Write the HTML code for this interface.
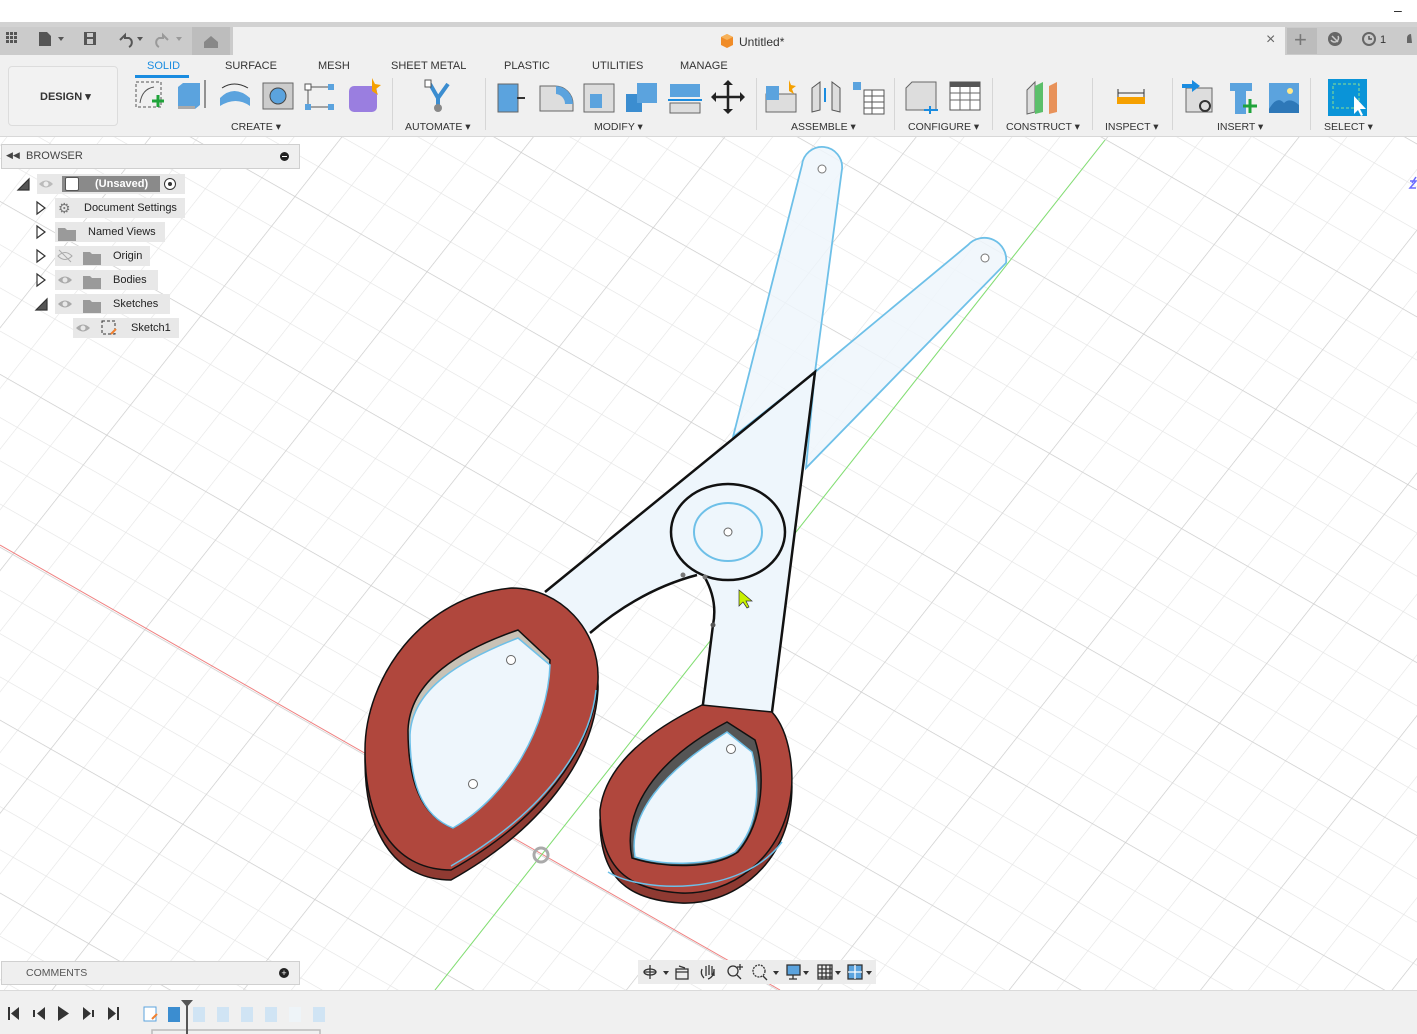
<!DOCTYPE html>
<html><head><meta charset="utf-8">
<style>
*{margin:0;padding:0;box-sizing:border-box}
body{width:1417px;height:1034px;overflow:hidden;background:#fff;font-family:"Liberation Sans",sans-serif;font-size:11px;color:#333;position:relative}
.abs{position:absolute}
.tabt{position:absolute;top:60px;font-size:11px;color:#333}
.grp{position:absolute;top:121px;font-size:10.5px;color:#333}
.sep{position:absolute;top:78px;width:1px;height:52px;background:#d6d6d6}
.row{position:absolute;height:20px;background:#e8e8e8;font-size:11px;line-height:20px;color:#222}
</style></head><body>
<div class="abs" style="left:1394px;top:2px;font-size:14px;color:#222">–</div>
<div class="abs" style="left:0;top:22px;width:1417px;height:6px;background:#d2d2d2"></div>
<div class="abs" style="left:0;top:27px;width:233px;height:28px;background:#cbcbcb"></div>
<div class="abs" style="left:192px;top:27px;width:38px;height:28px;background:#bdbdbd"></div>
<div class="abs" style="left:233px;top:27px;width:1052px;height:28px;background:#f0f0f0"></div>
<div class="abs" style="left:1285px;top:27px;width:132px;height:28px;background:#cbcbcb"></div>
<div class="abs" style="left:1287px;top:28px;width:30px;height:26px;background:#bcbcbc"></div>
<svg class="abs" style="left:0;top:27px" width="240" height="28">
<g fill="#555"><rect x="6" y="5" width="3" height="3"/><rect x="10" y="5" width="3" height="3"/><rect x="14" y="5" width="3" height="3"/><rect x="6" y="9" width="3" height="3"/><rect x="10" y="9" width="3" height="3"/><rect x="14" y="9" width="3" height="3"/><rect x="6" y="13" width="3" height="3"/><rect x="10" y="13" width="3" height="3"/><rect x="14" y="13" width="3" height="3"/></g>
<path d="M39 5h8l4 4v10h-12z" fill="#555"/><path d="M58 10l3 4 3-4z" fill="#555"/>
<rect x="84" y="5" width="12" height="13" fill="#555"/><rect x="87" y="6" width="6" height="4" fill="#cbcbcb"/><rect x="87" y="12" width="6" height="5" fill="#cbcbcb"/>
<path d="M120 13 l5 -5 v3 h4 a5 5 0 0 1 0 9" fill="none" stroke="#555" stroke-width="2"/><path d="M137 10l3 4 3-4z" fill="#555"/>
<path d="M168 13 l-5 -5 v3 h-4 a5 5 0 0 0 0 9" fill="none" stroke="#999" stroke-width="2"/><path d="M176 10l3 4 3-4z" fill="#999"/>
<path d="M204 15l7-6 7 6v6h-14z" fill="#888"/>
</svg>
<svg class="abs" style="left:719px;top:33px" width="16" height="16"><path d="M8 1l6 3v8l-6 3-6-3V4z" fill="#f08c28"/><path d="M8 1l6 3-6 3-6-3z" fill="#f7b25a"/></svg>
<div class="abs" style="left:739px;top:35px;font-size:12px;color:#333">Untitled*</div>
<div class="abs" style="left:1266px;top:31px;font-size:16px;color:#666">×</div>
<div class="abs" style="left:1294px;top:27px;font-size:22px;color:#777">+</div>
<svg class="abs" style="left:1326px;top:31px" width="90" height="18"><circle cx="9" cy="8" r="7" fill="#666"/><path d="M6 5 l6 6 M5 9 a4 4 0 0 0 7 -4" stroke="#cbcbcb" stroke-width="1.5" fill="none"/><circle cx="43" cy="8" r="7" fill="#666"/><circle cx="43" cy="8" r="5" fill="#cbcbcb"/><path d="M43 5v3h3" stroke="#555" stroke-width="1.5" fill="none"/><text x="54" y="12" font-size="11" fill="#333" font-family="Liberation Sans">1</text><path d="M85 3a4 4 0 0 0-4 4v5h5" fill="#666"/></svg>

<div class="abs" style="left:0;top:55px;width:1417px;height:82px;background:#f0f0f0;border-bottom:1px solid #d8d8d8"></div>
<div class="abs" style="left:8px;top:66px;width:110px;height:60px;border:1px solid #dcdcdc;border-radius:4px;background:#f2f2f2"></div>
<div class="abs" style="left:40px;top:90px;font-size:11px;font-weight:bold;color:#333">DESIGN ▾</div>
<div class="tabt" style="left:147px;color:#1a8ce0">SOLID</div>
<div class="abs" style="left:135px;top:75px;width:54px;height:3px;background:#1a8ce0"></div>
<div class="tabt" style="left:225px">SURFACE</div>
<div class="tabt" style="left:318px">MESH</div>
<div class="tabt" style="left:391px">SHEET METAL</div>
<div class="tabt" style="left:504px">PLASTIC</div>
<div class="tabt" style="left:592px">UTILITIES</div>
<div class="tabt" style="left:680px">MANAGE</div>
<div class="grp" style="left:231px">CREATE ▾</div>
<div class="grp" style="left:405px">AUTOMATE ▾</div>
<div class="grp" style="left:594px">MODIFY ▾</div>
<div class="grp" style="left:791px">ASSEMBLE ▾</div>
<div class="grp" style="left:908px">CONFIGURE ▾</div>
<div class="grp" style="left:1006px">CONSTRUCT ▾</div>
<div class="grp" style="left:1105px">INSPECT ▾</div>
<div class="grp" style="left:1217px">INSERT ▾</div>
<div class="grp" style="left:1324px">SELECT ▾</div>
<div class="sep" style="left:392px"></div><div class="sep" style="left:485px"></div><div class="sep" style="left:756px"></div><div class="sep" style="left:894px"></div><div class="sep" style="left:992px"></div><div class="sep" style="left:1092px"></div><div class="sep" style="left:1172px"></div><div class="sep" style="left:1310px"></div>
<svg class="abs" style="left:0;top:76px" width="1417" height="40">
<rect x="136" y="6" width="25" height="25" fill="none" stroke="#555" stroke-dasharray="3 2"/><path d="M140 27 q2 -14 14 -16" stroke="#555" fill="none"/><path d="M152 25h12M158 19v12" stroke="#1fa33a" stroke-width="3"/>
<path d="M178 11l5-4h17v22l-5 4h-17z" fill="#5ba3de"/><rect x="178" y="30" width="17" height="3" fill="#aaa"/><path d="M205 4v28" stroke="#333"/>
<path d="M220 22 q14-14 30 0 v8 q-14-10-30 0z" fill="#5ba3de"/><path d="M222 12 q12-8 26 0" stroke="#333" fill="none"/>
<rect x="263" y="7" width="30" height="26" fill="#ccc" stroke="#666"/><circle cx="278" cy="20" r="8" fill="#5ba3de" stroke="#444"/>
<rect x="305" y="8" width="6" height="6" fill="#fff" stroke="#555"/><rect x="328" y="8" width="6" height="6" fill="#5ba3de"/><rect x="305" y="28" width="6" height="6" fill="#5ba3de"/><rect x="328" y="28" width="6" height="6" fill="#5ba3de"/><path d="M311 11h17M308 14v14M311 31h17" stroke="#555"/>
<rect x="349" y="10" width="28" height="26" rx="5" fill="#9a7ee0"/><path d="M372 2l3 6 6 1-5 4 2 6-6-4" fill="#f5a000"/>
<path d="M430 8l8 14 10-14M438 22v10" stroke="#3b8dd0" stroke-width="4" fill="none"/><rect x="425" y="4" width="6" height="7" fill="#fff" stroke="#555"/><circle cx="438" cy="32" r="4" fill="#888"/>
<rect x="498" y="8" width="20" height="28" fill="#5ba3de" stroke="#666"/><path d="M517 22h8" stroke="#333" stroke-width="2"/>
<path d="M540 10h15a18 18 0 0 1 18 18v7h-33z" fill="#ddd" stroke="#666"/><path d="M556 10a18 18 0 0 1 17 18h-8a10 10 0 0 0-9-10z" fill="#5ba3de"/>
<rect x="584" y="8" width="30" height="28" fill="#ddd" stroke="#666"/><rect x="590" y="18" width="12" height="14" fill="#5ba3de"/>
<rect x="626" y="18" width="16" height="18" fill="#3b8dd0"/><rect x="637" y="7" width="20" height="20" fill="#5ba3de"/>
<rect x="670" y="8" width="30" height="13" fill="#5ba3de"/><path d="M668 24h34" stroke="#1a8ce0" stroke-width="2"/><rect x="670" y="27" width="30" height="10" fill="#ddd" stroke="#666"/>
<path d="M728 6v30M713 21h30" stroke="#222" stroke-width="2.5"/><path d="M723 9l5-5 5 5zM723 33l5 5 5-5zM716 16l-5 5 5 5zM740 16l5 5-5 5z" fill="#222"/>
<rect x="766" y="18" width="30" height="18" fill="#ddd" stroke="#666"/><rect x="766" y="10" width="13" height="14" fill="#5ba3de"/><path d="M789 4l2 5 5 1-4 3 2 5-5-3" fill="#f5a000"/>
<path d="M812 12l8-6v28l-8 2zM840 12l-8-6v28l8 2z" fill="#ddd" stroke="#555"/><rect x="824" y="12" width="2" height="14" fill="#1a8ce0"/>
<rect x="853" y="6" width="8" height="8" fill="#5ba3de"/><rect x="864" y="14" width="20" height="24" fill="#fff" stroke="#555"/><path d="M864 20h20M864 26h20M864 32h20M872 14v24" stroke="#555"/>
<path d="M906 12l6-6h24v28h-30z" fill="#ddd" stroke="#666"/><path d="M924 34h14M930 30v8" stroke="#1a8ce0" stroke-width="2"/>
<rect x="950" y="6" width="30" height="28" fill="#fff" stroke="#555"/><rect x="950" y="6" width="30" height="5" fill="#555"/><path d="M950 17h30M950 24h30M960 11v23M970 11v23" stroke="#666"/>
<path d="M1027 14l8-8v30l-8 2z" fill="#ddd" stroke="#666"/><path d="M1035 10l8-4v30l-8 2z" fill="#5bbf6a"/><path d="M1049 10l8-4v30l-8 2z" fill="#e8925a"/>
<rect x="1117" y="21" width="28" height="7" fill="#f5a000"/><path d="M1118 17h26M1118 13v8M1144 13v8" stroke="#333"/>
<rect x="1186" y="12" width="26" height="24" fill="#ddd" stroke="#666"/><path d="M1182 10h12" stroke="#1a8ce0" stroke-width="4"/><path d="M1192 4l8 6-8 6z" fill="#1a8ce0"/><circle cx="1205" cy="30" r="5" fill="none" stroke="#333" stroke-width="2"/>
<rect x="1230" y="7" width="22" height="8" fill="#5ba3de"/><rect x="1235" y="15" width="11" height="23" fill="#5ba3de"/><path d="M1243 30h14M1250 23v14" stroke="#1fa33a" stroke-width="3"/>
<rect x="1269" y="7" width="30" height="30" fill="#5ba3de"/><circle cx="1290" cy="15" r="3" fill="#ffe88a"/><path d="M1269 33 q8-14 15-6 q6-6 15 2v8h-30z" fill="#2e78b8"/>
<rect x="1328" y="3" width="39" height="39" fill="#0a94d8"/><rect x="1333" y="8" width="26" height="24" fill="none" stroke="#8fe08f" stroke-dasharray="3 2"/><path d="M1354 20v18l4-4 3 6 2-1-3-6h6z" fill="#fff"/>
</svg>

<svg class="abs" style="left:0;top:137px" width="1417" height="853">
<defs>
<pattern id="g" patternUnits="userSpaceOnUse" width="38" height="38" patternTransform="matrix(0.869 0.495 -0.619 0.785 541 718)">
<path d="M0 0H38M0 0V38" stroke="#e4e4e4" stroke-width="1.2" fill="none"/></pattern>
<pattern id="G" patternUnits="userSpaceOnUse" width="152" height="152" patternTransform="matrix(0.869 0.495 -0.619 0.785 541 718)">
<path d="M0 0H152M0 0V152" stroke="#cdcdcd" stroke-width="1.2" fill="none"/></pattern>
</defs>
<rect width="1417" height="853" fill="#fff"/>
<rect width="1417" height="853" fill="url(#g)"/>
<rect width="1417" height="853" fill="url(#G)"/>
<path d="M0 408 L780 853" stroke="#f08080" stroke-width="1"/>
<path d="M1105 3 L435 853" stroke="#80e070" stroke-width="1"/>
<path d="M1412 46 l4-6 M1410 44h6l-6 7h6" stroke="#6a6aff" stroke-width="1.5" fill="none"/>
</svg>

<svg class="abs" style="left:0;top:0" width="1417" height="990">
<g fill="#eef6fc" fill-opacity="0.85" stroke="#6ec0e8" stroke-width="1.8">
<path d="M802 165 a20 20 0 0 1 40 4 L815 372 L733 437 Z"/>
<path d="M968 245 a22 22 0 0 1 38 18 L806 468 L815 372 Z"/>
</g>
<circle cx="822" cy="169" r="4" fill="#fff" stroke="#777"/>
<circle cx="985" cy="258" r="4" fill="#fff" stroke="#777"/>
<path d="M815 372 L545 592 L590 633 Q640 590 697 575 L704 576 Q718 600 713 625 L702 712 L772 712 Z" fill="#eef6fc"/>
<path d="M545 592 L815 372 L772 712 M590 633 Q640 590 697 575 M704 576 Q718 600 713 625 L702 712" fill="none" stroke="#111" stroke-width="2.5"/>
<ellipse cx="728" cy="532" rx="57" ry="48" fill="#eef6fc" stroke="#111" stroke-width="2.5"/>
<ellipse cx="728" cy="532" rx="34" ry="29" fill="none" stroke="#6ec0e8" stroke-width="2"/>
<circle cx="728" cy="532" r="4" fill="#fff" stroke="#666"/>
<circle cx="683" cy="575" r="2.5" fill="#777"/><circle cx="705" cy="577" r="2.5" fill="#777"/><circle cx="713" cy="625" r="2.5" fill="#555"/>
<path d="M512 596 C560 596 600 640 598 690 C594 760 540 830 451 880 C400 880 365 840 365 760 C365 690 420 604 512 596 Z" fill="#8f3a32" stroke="#111" stroke-width="1.5"/>
<path d="M512 588 C560 588 600 630 598 680 C594 750 540 820 451 870 C400 870 365 830 365 750 C365 680 420 596 512 588 Z" fill="#b0473d" stroke="#111" stroke-width="1.5"/>
<path d="M451 866 C540 815 590 750 596 690" stroke="#6ec0e8" stroke-width="1.5" fill="none"/>
<path d="M518 630 L550 660 C548 720 510 790 453 828 C420 815 408 780 408 730 C410 680 460 650 518 630 Z" fill="#c8c2b6" stroke="#111" stroke-width="1.5"/>
<path d="M518 638 L550 665 C548 725 510 795 453 828 C420 815 410 780 410 735 C412 688 462 660 518 638 Z" fill="#eef6fc" stroke="#6ec0e8" stroke-width="1.5"/>
<circle cx="511" cy="660" r="4.5" fill="#fff" stroke="#666"/><circle cx="473" cy="784" r="4.5" fill="#fff" stroke="#666"/>
<path d="M702 715 L772 720 C790 740 795 780 790 810 C780 870 730 905 681 903 C630 900 600 880 600 820 C605 780 640 745 702 715 Z" fill="#8f3a32" stroke="#111" stroke-width="1.5"/>
<path d="M702 705 L772 712 C790 732 795 772 790 800 C780 860 730 895 681 893 C630 890 600 870 600 810 C605 770 640 735 702 705 Z" fill="#b0473d" stroke="#111" stroke-width="1.5"/>
<path d="M608 872 C640 892 740 898 782 842" stroke="#6ec0e8" stroke-width="1.5" fill="none"/>
<path d="M727 722 L755 740 C765 770 765 820 738 852 C712 870 662 868 632 858 C622 810 655 760 727 722 Z" fill="#555" stroke="#111" stroke-width="1.5"/>
<path d="M727 732 L752 752 C760 785 760 825 735 852 C710 866 664 866 635 857 C628 815 662 772 727 732 Z" fill="#eef6fc" stroke="#6ec0e8" stroke-width="1.5"/>
<circle cx="731" cy="749" r="4.5" fill="#fff" stroke="#666"/>
<circle cx="541" cy="855" r="7" fill="none" stroke="#aaa" stroke-width="3"/>
<path d="M739 590 l0 16 4-4 4 6 2-1-3-6 6 0z" fill="#c8f000" stroke="#333" stroke-width="0.7"/>
</svg>

<div class="abs" style="left:1px;top:144px;width:299px;height:25px;background:#efefef;border:1px solid #cfcfcf"></div>
<div class="abs" style="left:6px;top:150px;font-size:9px;color:#444">◀◀</div>
<div class="abs" style="left:26px;top:150px;font-size:11px;color:#444">BROWSER</div>
<div class="abs" style="left:280px;top:152px;width:9px;height:9px;border-radius:50%;background:#222"></div>
<div class="abs" style="left:282px;top:156px;width:5px;height:1px;background:#fff"></div>
<svg class="abs" style="left:0;top:170px" width="200" height="170">
<g fill="#fff" stroke="#333" stroke-width="1.2">
<path d="M18 20h11v-11z" fill="#555"/>
<path d="M37 32v12l8-6z"/><path d="M37 56v12l8-6z"/><path d="M37 80v12l8-6z"/><path d="M37 104v12l8-6z"/>
<path d="M36 140h11v-11z" fill="#555"/>
</g></svg>
<div class="row" style="left:37px;top:174px;width:148px"></div>
<div class="abs" style="left:62px;top:176px;width:98px;height:16px;background:#8a8a8a"></div>
<div class="abs" style="left:65px;top:177px;width:14px;height:14px;background:#fff;border:1px solid #555;border-radius:2px"></div>
<div class="abs" style="left:95px;top:178px;font-size:11px;font-weight:bold;color:#fff">(Unsaved)</div>
<div class="abs" style="left:164px;top:178px;width:12px;height:12px;border:1.5px solid #333;border-radius:50%;background:#fff"></div>
<div class="abs" style="left:168px;top:182px;width:4px;height:4px;border-radius:50%;background:#333"></div>
<svg class="abs" style="left:36px;top:176px" width="20" height="16"><path d="M3 8 q7-7 14 0 q-7 7-14 0z" fill="#bbb"/><circle cx="10" cy="8" r="2.5" fill="#eee"/></svg>
<div class="row" style="left:55px;top:198px;width:130px"><span style="position:absolute;left:29px">Document Settings</span></div>
<div class="abs" style="left:58px;top:201px;font-size:14px;color:#777;line-height:14px">⚙</div>
<div class="row" style="left:55px;top:222px;width:110px"><span style="position:absolute;left:33px">Named Views</span></div>
<div class="row" style="left:55px;top:246px;width:95px"><span style="position:absolute;left:58px">Origin</span></div>
<div class="row" style="left:55px;top:270px;width:103px"><span style="position:absolute;left:58px">Bodies</span></div>
<div class="row" style="left:55px;top:294px;width:115px"><span style="position:absolute;left:58px">Sketches</span></div>
<div class="row" style="left:73px;top:318px;width:106px"><span style="position:absolute;left:58px">Sketch1</span></div>
<svg class="abs" style="left:55px;top:198px" width="130" height="140">
<g fill="#9a9a9a"><path d="M3 30h7l2 2h9v11h-18z"/><path d="M28 54h7l2 2h9v11h-18z"/><path d="M28 78h7l2 2h9v11h-18z"/><path d="M28 102h7l2 2h9v11h-18z"/></g>
<path d="M3 58 q7-7 14 0 q-7 7-14 0z M4 52 l12 12" fill="none" stroke="#aaa"/>
<path d="M3 82 q7-7 14 0 q-7 7-14 0z" fill="#aaa"/><circle cx="10" cy="82" r="2.5" fill="#e8e8e8"/>
<path d="M3 106 q7-7 14 0 q-7 7-14 0z" fill="#aaa"/><circle cx="10" cy="106" r="2.5" fill="#e8e8e8"/>
<path d="M21 130 q7-7 14 0 q-7 7-14 0z" fill="#aaa"/><circle cx="28" cy="130" r="2.5" fill="#e8e8e8"/>
<rect x="47" y="123" width="13" height="13" fill="none" stroke="#333" stroke-dasharray="3 2"/><path d="M56 136l5-5" stroke="#f08030" stroke-width="2"/>
</svg>

<div class="abs" style="left:1px;top:961px;width:299px;height:24px;background:#efefef;border:1px solid #d0d0d0"></div>
<div class="abs" style="left:26px;top:967px;font-size:10.5px;color:#555">COMMENTS</div>
<div class="abs" style="left:279px;top:968px;width:10px;height:10px;border-radius:50%;background:#222;color:#fff;font-size:9px;line-height:10px;text-align:center">+</div>
<div class="abs" style="left:638px;top:960px;width:238px;height:24px;background:#ececec"></div>
<svg class="abs" style="left:638px;top:960px" width="240" height="24">
<g stroke="#333" fill="none" stroke-width="1.3">
<path d="M12 5v14M6 12h12"/><ellipse cx="12" cy="12" rx="6" ry="3"/>
<rect x="38" y="9" width="12" height="10"/><path d="M38 12h12M41 6l6 2"/>
<path d="M66 18 q-4-4-2-9 M68 16v-10M71 15v-10M74 15v-9M76 16v-7 q0 8-6 10"/>
<circle cx="95" cy="11" r="5"/><path d="M99 15l4 4M102 4v6M99 7h6"/>
<circle cx="121" cy="11" r="6" stroke-dasharray="2 1"/><path d="M125 16l4 4"/>
<rect x="149" y="5" width="13" height="10" fill="#5ba3de"/><path d="M155 15v4M151 19h8"/>
<rect x="180" y="5" width="14" height="14"/><path d="M180 9h14M180 13h14M180 17h14M184 5v14M188 5v14M192 5v14"/>
<rect x="210" y="5" width="14" height="14" fill="#5ba3de"/><path d="M217 5v14M210 12h14" stroke="#fff"/>
</g>
<g fill="#333"><path d="M25 11l3 4 3-4z"/><path d="M135 11l3 4 3-4z"/><path d="M165 11l3 4 3-4z"/><path d="M197 11l3 4 3-4z"/><path d="M228 11l3 4 3-4z"/></g>
</svg>

<div class="abs" style="left:0;top:990px;width:1417px;height:44px;background:#f0f0f0;border-top:1px solid #dadada"></div>
<svg class="abs" style="left:0;top:990px" width="340" height="44">
<g fill="#333"><rect x="8" y="17" width="2" height="13"/><path d="M19 17v13l-8-6.5z"/><path d="M45 17v13l-8-6.5z"/><rect x="33" y="20" width="2" height="7"/><path d="M58 16v15l11-7.5z"/><path d="M83 17v13l8-6.5z"/><rect x="92" y="20" width="2" height="7"/><path d="M108 17v13l8-6.5z"/><rect x="117" y="17" width="2" height="13"/></g>
<rect x="144" y="17" width="12" height="14" fill="#fff" stroke="#5ba3de"/><path d="M152 29l5-5" stroke="#f08030" stroke-width="2"/>
<rect x="168" y="17" width="12" height="15" fill="#3b8dd0"/>
<g fill="#d0e4f4"><rect x="193" y="17" width="12" height="15"/><rect x="217" y="17" width="12" height="15"/><rect x="241" y="17" width="12" height="15"/><rect x="265" y="17" width="12" height="15"/><rect x="289" y="17" width="12" height="15" fill="#eef4f8"/><rect x="313" y="17" width="12" height="15"/></g>
<path d="M152 46v-6h168v6" stroke="#bbb" fill="none" stroke-width="1.5"/>
<rect x="186" y="14" width="2" height="30" fill="#555"/><path d="M181 10h12l-6 7z" fill="#555"/>
</svg>
</body></html>
